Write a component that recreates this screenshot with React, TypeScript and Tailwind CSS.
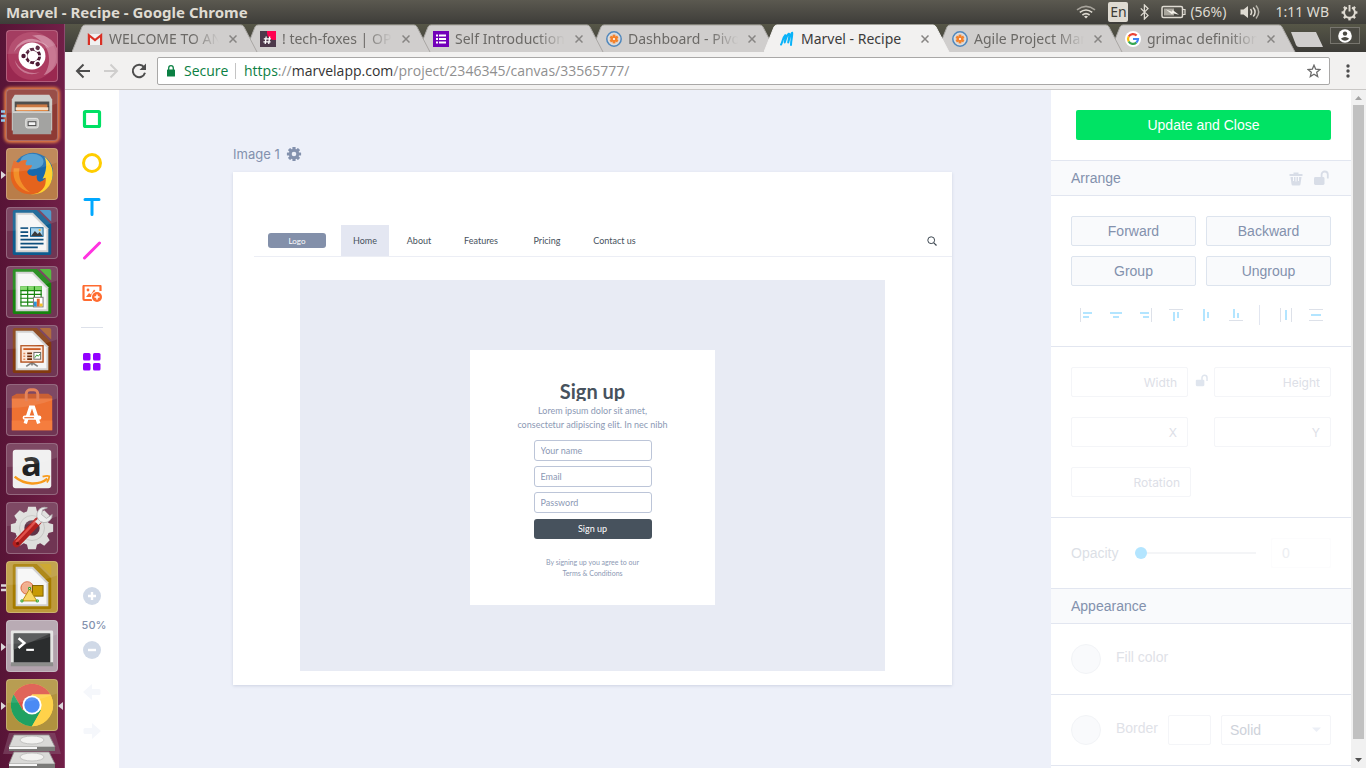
import type { ReactNode } from 'react';

const TEETH_8 = [0, 45, 90, 135, 180, 225, 270, 315];

/* ---------- shared drawings ---------- */

function Cog({ size, color, hole }: { size: number; color: string; hole: string }) {
  return (
    <svg width={size} height={size} viewBox="0 0 16 16" aria-hidden="true">
      {TEETH_8.map((a) => (
        <rect key={a} x="6.4" y="0.9" width="3.2" height="4" rx="0.5" fill={color} transform={`rotate(${a} 8 8)`} />
      ))}
      <circle cx="8" cy="8" r="5.2" fill={color} />
      <circle cx="8" cy="8" r="2.3" fill={hole} />
    </svg>
  );
}

function OpenLock({ width, height, color }: { width: number; height: number; color: string }) {
  return (
    <svg width={width} height={height} viewBox="0 0 16 16" aria-hidden="true">
      <rect x="1" y="7" width="10.5" height="8" rx="1.4" fill={color} />
      <path d="M8.6 8V4.6a3.1 3.1 0 0 1 6.2 0V8.6" fill="none" stroke={color} strokeWidth="1.8" />
    </svg>
  );
}

/* ---------- desktop panel ---------- */

function DesktopPanel() {
  return (
    <header className="flex h-6 shrink-0 items-center bg-linear-to-b from-[#5b5950] to-[#3e3d39] pl-1.5 pr-2 text-sm text-[#dfdbd2]">
      <h1 className="flex-1 truncate text-[15px] leading-5 font-bold">Marvel - Recipe - Google Chrome</h1>
      <svg width="20" height="14" viewBox="0 0 20 14" aria-label="Wi-Fi">
        <g fill="none" stroke="#dfdbd2" strokeWidth="1.6">
          <path d="M1 4.8Q10 -2 19 4.8" opacity=".6" />
          <path d="M3.8 7.4Q10 2.6 16.2 7.4" />
          <path d="M6.4 10Q10 7.2 13.6 10" />
        </g>
        <path d="M8 11.4Q10 10 12 11.4L10 13.4Z" fill="#dfdbd2" />
      </svg>
      <span className="ml-3 flex h-5 w-5 items-center justify-center rounded-xs bg-[#dfdbd2] text-sm text-[#3c3b37]">En</span>
      <svg className="ml-3" width="9" height="16" viewBox="0 0 9 16" aria-label="Bluetooth">
        <path d="M0.8 4.4L8 11.4L4.4 15V1L8 4.6L0.8 11.6" fill="none" stroke="#dfdbd2" strokeWidth="1.3" />
      </svg>
      <svg className="ml-3" width="25" height="14" viewBox="0 0 25 14" aria-label="Battery">
        <rect x="1" y="1.5" width="20.5" height="11" rx="1.5" fill="none" stroke="#dfdbd2" strokeWidth="1.5" />
        <path d="M22 4.5h2v5h-2" fill="none" stroke="#dfdbd2" strokeWidth="1.2" />
        <rect x="3" y="3.5" width="10" height="7" fill="#a9a69d" />
        <path d="M5 4.5l6 2.2.6-1.6L18 9.8l-6-1.6-.8 1.4Z" fill="#f4f1ea" />
      </svg>
      <span className="ml-1">(56%)</span>
      <svg className="ml-3.5" width="21" height="16" viewBox="0 0 21 16" aria-label="Volume">
        <path d="M0.5 5.5h3L8 2v12L3.5 10.5h-3Z" fill="#dfdbd2" />
        <g fill="none" stroke="#dfdbd2" strokeWidth="1.5">
          <path d="M10.5 5Q12.8 8 10.5 11" />
          <path d="M13.2 3.4Q17 8 13.2 12.6" />
          <path d="M16 1.6Q21.4 8 16 14.4" opacity=".7" />
        </g>
      </svg>
      <span className="ml-3.5">1:11 WB</span>
      <svg className="ml-3" width="17" height="17" viewBox="0 0 17 17" aria-label="Session">
        {TEETH_8.filter((a) => a !== 0).map((a) => (
          <rect key={a} x="7.3" y="0.6" width="2.4" height="3" fill="#dfdbd2" transform={`rotate(${a} 8.5 8.5)`} />
        ))}
        <path d="M6 3.6a5.4 5.4 0 1 0 5 0" fill="none" stroke="#dfdbd2" strokeWidth="1.9" />
        <path d="M8.5 1v6.5" stroke="#dfdbd2" strokeWidth="1.9" />
      </svg>
    </header>
  );
}

/* ---------- launcher ---------- */

function DocSheet({ edge, corner }: { edge: string; corner: string }) {
  return (
    <>
      <path d="M8 2H31L46 17V47a2 2 0 0 1-2 2H8a2 2 0 0 1-2-2V4a2 2 0 0 1 2-2Z" fill={edge} />
      <path d="M34 2H44a2 2 0 0 1 2 2V14Z" fill={corner} />
      <path d="M9 5H27L43 21V46H9Z" fill="#cfcfcf" />
      <path d="M11 7H26L41 22V44H11Z" fill="#f6f6f6" />
    </>
  );
}

const launcherItems: { name: string; tile: string; mark?: 'dots' | 'pair' | 'arrow' | 'active'; art: ReactNode }[] = [
  {
    name: 'Search your computer',
    tile: 'bg-[#9a2850]',
    art: (
      <>
        <circle cx="26" cy="26" r="25" fill="#b9486b" opacity=".6" />
        <path d="M26 5A21 21 0 0 1 38 46A26 26 0 0 0 26 5Z" fill="#e5b6c6" opacity=".5" />
        <path d="M7 22A20 20 0 0 1 26 8A26 26 0 0 1 44 18A24 24 0 0 0 7 22Z" fill="#f0c9d6" opacity=".5" />
        <path d="M8 30A18 18 0 0 0 34 43A22 22 0 0 1 8 30Z" fill="#e5b6c6" opacity=".5" />
        <circle cx="26" cy="26" r="14" fill="#fff" />
        <circle cx="27" cy="26" r="7" fill="none" stroke="#4e1a35" strokeWidth="3" />
        {[0, 120, 240].map((a) => (
          <g key={a} transform={`rotate(${a} 27 26)`}>
            <circle cx="18" cy="26" r="3.4" fill="#fff" />
            <circle cx="17.2" cy="26" r="2.3" fill="#4e1a35" />
            <path d="M32 26h4" stroke="#fff" strokeWidth="1.4" />
          </g>
        ))}
      </>
    ),
  },
  {
    name: 'Files',
    tile: 'bg-[#8e3a34] shadow-[0_0_3px_2px_#e07a45]',
    mark: 'dots',
    art: (
      <>
        <path d="M8 5H44L47 10V42H5V10Z" fill="#c9c9c6" />
        <rect x="8" y="12" width="36" height="14" fill="#3c3a39" />
        <path d="M10 15h32v11H10Z" fill="#c86b2f" />
        <path d="M9 18h34v3H9Z" fill="#f5ddc4" />
        <path d="M10 21h33v6H10Z" fill="#e88b3f" />
        <path d="M6 22H46V46H6Z" fill="#a3a3a1" />
        <path d="M6 22H46V24H6Z" fill="#cfcfcd" />
        <rect x="19.5" y="29.5" width="13" height="10" rx="2" fill="#c8c8c6" stroke="#e8e8e6" />
        <rect x="22" y="33" width="8" height="4" fill="#f4f4f4" stroke="#4a4a4a" />
      </>
    ),
  },
  {
    name: 'Firefox',
    tile: 'bg-[#b97d49]',
    mark: 'arrow',
    art: (
      <>
        <circle cx="27" cy="25" r="21" fill="#1769ad" />
        <ellipse cx="26" cy="13" rx="12" ry="8" fill="#62b8e6" opacity=".6" />
        <path d="M39 8C46 14 49 22 47 31C44 43 34 48 25 47C34 44 40 38 40 30L37 31C41 24 42 15 39 8Z" fill="#ffd22e" />
        <path d="M7 12C9 13 10 14 12 14C16 11 19 11 21 12C19 14 19 16 20 17L26 17C26 20 22 21 21 24C22 28 27 29 31 27C30 34 35 37 40 30C42 40 34 48 24 47C11 47 3 37 4 25C4 20 6 17 7 12Z" fill="#e5631d" />
        <path d="M7 20C5 32 12 42 24 45C15 38 11 29 13 20Z" fill="#f59a2d" opacity=".8" />
      </>
    ),
  },
  {
    name: 'LibreOffice Writer',
    tile: 'bg-[#703553]',
    art: (
      <>
        <DocSheet edge="#0d5c8f" corner="#3f8fc4" />
        <g stroke="#0e4f7d" strokeWidth="1.8">
          <path d="M14 21h8M14 25h8M14 29h8M14 33h24M14 37h24M14 41h18" />
        </g>
        <rect x="24.5" y="20.5" width="13" height="9" fill="#a9d6ef" stroke="#0d5c8f" />
        <path d="M25 29l4-5 3 3 2-2 3 4Z" fill="#3b3b3b" />
        <circle cx="34" cy="23" r="1.2" fill="#f6b530" />
      </>
    ),
  },
  {
    name: 'LibreOffice Calc',
    tile: 'bg-[#703553]',
    art: (
      <>
        <DocSheet edge="#17840f" corner="#43b52c" />
        <rect x="14.5" y="20.5" width="21" height="20" fill="#fff" stroke="#17840f" strokeWidth="1.2" />
        <path d="M14 20h22v4H14Z" fill="#7ed767" />
        <path d="M14 24.5h22M14 28.5h22M14 32.5h22M14 36.5h22M21.5 20v20M28.5 20v20" stroke="#17840f" strokeWidth="1.2" />
        <rect x="27.5" y="31.5" width="10" height="10" fill="#fff" stroke="#777" />
        <path d="M28 36h3v5h-3Z" fill="#2b95d9" />
        <path d="M31 33h3v8h-3Z" fill="#e2692b" />
        <path d="M34 38h3v3h-3Z" fill="#f3c22b" />
      </>
    ),
  },
  {
    name: 'LibreOffice Impress',
    tile: 'bg-[#703553]',
    art: (
      <>
        <DocSheet edge="#833a0e" corner="#a95d2a" />
        <path d="M26 38v3M20 42l6-4 6 4" fill="none" stroke="#808080" strokeWidth="1.8" />
        <rect x="14.5" y="20.5" width="23" height="17" fill="#fbe9dd" stroke="#b14c17" strokeWidth="1.4" />
        <path d="M17 24h18" stroke="#c9541a" strokeWidth="1.8" />
        <path d="M17 28.500h2M17 31.500h2M17 34.500h2" stroke="#e28b5c" strokeWidth="1.6" />
        <path d="M21 28.500h5M21 31.500h5M21 34.500h5" stroke="#6d2d0c" strokeWidth="1.8" />
        <rect x="28" y="27.500" width="7" height="7" fill="#fff" stroke="#666" />
        <path d="M29 33l2-3 1.500 1.500L34.500 29" fill="none" stroke="#32a02f" />
      </>
    ),
  },
  {
    name: 'Ubuntu Software',
    tile: 'bg-[#703553]',
    art: (
      <>
        <path d="M5 12L10 9H43L47 12V16H5Z" fill="#c54f1d" />
        <path d="M5 14H47V47H5Z" fill="#ee7132" />
        <path d="M5 37H47V47H5Z" fill="#f57d3e" />
        <path d="M20 17V9a4 4 0 0 1 4-4h4a4 4 0 0 1 4 4v8" fill="none" stroke="#e0764a" strokeWidth="3" />
        <path d="M19 40L24.500 23h3L33 40" fill="none" stroke="#fff" strokeWidth="3.600" />
        <path d="M18.500 34h15" stroke="#fff" strokeWidth="4.500" strokeLinecap="round" />
        <path d="M18 34h10" stroke="#ee7132" strokeWidth="1.200" />
      </>
    ),
  },
  {
    name: 'Amazon',
    tile: 'bg-[#703553]',
    art: (
      <>
        <rect x="6" y="6" width="40" height="40" rx="3" fill="#f0f0f0" />
        <text x="25.500" y="33" textAnchor="middle" fontFamily="Open Sans, sans-serif" fontWeight="700" fontSize="36" fill="#222">
          a
        </text>
        <path d="M8 34C18 43 34 43 42 36" fill="none" stroke="#f79a1c" strokeWidth="2.600" />
        <path d="M37 34C40 33 43 33 44 33.500C44 36 43 38 41.500 40" fill="none" stroke="#f79a1c" strokeWidth="1.800" />
      </>
    ),
  },
  {
    name: 'System Settings',
    tile: 'bg-[#703553]',
    art: (
      <>
        {TEETH_8.map((a) => (
          <path key={a} d="M20.500 10L22 4h8l1.500 6Z" fill="#dededc" transform={`rotate(${a} 26 26)`} />
        ))}
        <circle cx="26" cy="26" r="18" fill="#dededc" />
        <circle cx="26" cy="26" r="13" fill="none" stroke="#c5c5c3" />
        <circle cx="26" cy="26" r="8" fill="#5f3347" />
        <path d="M10 42L32 19" stroke="#b3201f" strokeWidth="8" strokeLinecap="round" />
        <path d="M10 40L30 19" stroke="#e0504a" strokeWidth="2.500" strokeLinecap="round" />
        <path d="M31 21L37 15" stroke="#e3e3e3" strokeWidth="5" />
        <path d="M42 5A8 8 0 1 0 47 12L41 16L36 12L37 7Z" fill="#ececec" stroke="#a8a8a8" strokeWidth=".8" />
        <circle cx="11" cy="42" r="1.600" fill="#6e1010" />
      </>
    ),
  },
  {
    name: 'LibreOffice Draw',
    tile: 'bg-[#bd9a3b]',
    mark: 'pair',
    art: (
      <>
        <DocSheet edge="#a67c00" corner="#c9a01c" />
        <circle cx="21" cy="27" r="6.500" fill="#f2b08f" stroke="#d8643a" />
        <rect x="26.500" y="24.500" width="11" height="11" fill="#c79a05" stroke="#7d5f00" />
        <path d="M23.500 28L31 40.500H16Z" fill="#f8d765" stroke="#b78d0c" />
        <path d="M22.500 26.500h2v2h-2ZM14.500 39.500h2v2h-2ZM30.500 39.500h2v2h-2Z" fill="#fff" stroke="#28a024" />
      </>
    ),
  },
  {
    name: 'Terminal',
    tile: 'bg-[#b2a2ac]',
    mark: 'arrow',
    art: (
      <>
        <rect x="4" y="10" width="44" height="36" rx="1.500" fill="#e4e4e2" />
        <path d="M4 43h44v4H4Z" fill="#8d8d8b" />
        <rect x="7" y="13" width="38" height="30" fill="#2b2d2e" />
        <path d="M7 13H45L7 30Z" fill="#4a4c4d" />
        <path d="M12 18l6 5-6 5" fill="none" stroke="#fff" strokeWidth="2.600" />
        <path d="M20 30h8" stroke="#fff" strokeWidth="2.200" />
      </>
    ),
  },
  {
    name: 'Google Chrome',
    tile: 'bg-[#b0923f]',
    mark: 'active',
    art: (
      <>
        <circle cx="26" cy="26" r="22" fill="#ffd24a" />
        <path d="M26 15H45.050A22 22 0 0 0 6.950 15L16.500 31.500Z" fill="#dd5447" />
        <path d="M6.950 15A22 22 0 0 0 26 48L35.500 31.500L16.500 31.500Z" fill="#1fa162" />
        <path d="M35.500 31.500L26 48A22 22 0 0 0 45.050 15H26Z" fill="#ffd24a" />
        <circle cx="26" cy="26" r="10" fill="#fff" />
        <circle cx="26" cy="26" r="8" fill="#4a8af4" />
      </>
    ),
  },
];

function RunMark({ mark }: { mark: 'dots' | 'pair' | 'arrow' | 'active' }) {
  if (mark === 'dots' || mark === 'pair') {
    return (
      <svg className="absolute top-5 -left-1.5 h-3 w-1.5" viewBox="0 0 6 12" aria-hidden="true">
        {mark === 'dots' ? (
          <path d="M0 1.500h4M0 6h5M0 10.500h4" stroke="#8fc8ea" strokeWidth="2.600" />
        ) : (
          <path d="M0 3.500h5M0 8h5" stroke="#dcd6da" strokeWidth="2.400" />
        )}
      </svg>
    );
  }
  return (
    <>
      <svg className="absolute top-5 -left-1.5 h-3 w-1.5" viewBox="0 0 6 12" aria-hidden="true">
        <path d="M0 2L5 6L0 10Z" fill="#dcd6da" />
      </svg>
      {mark === 'active' && (
        <svg className="absolute top-5 -right-1.5 h-3 w-1.5" viewBox="0 0 6 12" aria-hidden="true">
          <path d="M6 2L1 6L6 10Z" fill="#dcd6da" />
        </svg>
      )}
    </>
  );
}

function Launcher() {
  return (
    <nav aria-label="Launcher" className="flex w-[65px] shrink-0 flex-col items-center gap-[7px] overflow-hidden border-r border-[#8d4a70] bg-linear-to-r from-[#571436] to-[#711f47] pt-1.5">
      {launcherItems.map((item) => (
        <button key={item.name} type="button" aria-label={item.name} className={`relative size-[52px] shrink-0 rounded-sm border border-white/25 ${item.tile}`}>
          <svg className="size-[50px]" viewBox="0 0 52 52" aria-hidden="true">
            {item.art}
            <path d="M0 0H52V14Q26 24 0 24Z" fill="#fff" opacity=".1" />
          </svg>
          {item.mark && <RunMark mark={item.mark} />}
        </button>
      ))}
      <svg className="-mt-1.5 h-10 w-[58px] shrink-0" viewBox="0 0 58 40" aria-label="Drives">
        <path d="M6 1H52L58 22H0Z" fill="#8a5a74" opacity=".5" />
        {[0, 17, 34].map((y) => (
          <g key={y} transform={`translate(0 ${y})`}>
            <path d="M11 3H46L52 15H6Z" fill="#d9d9d7" stroke="#8f8f8d" strokeWidth=".8" />
            <ellipse cx="29" cy="8" rx="12" ry="4" fill="#f2f2f0" stroke="#b9b9b7" strokeWidth=".8" />
            <path d="M6 15H52V19H6Z" fill="#7b7b79" />
            <path d="M6 15H34V17H6Z" fill="#f6f6f6" />
          </g>
        ))}
      </svg>
    </nav>
  );
}

/* ---------- browser tabs ---------- */

function PivotalIcon() {
  return (
    <svg width="16" height="16" viewBox="0 0 16 16" aria-hidden="true">
      <circle cx="8" cy="8" r="7.200" fill="#dcdcdc" stroke="#4f87bd" strokeWidth="1.500" />
      {[0, 60, 120, 180, 240, 300].map((a) => (
        <path key={a} d="M8 6.500V3.600" stroke="#f5822a" strokeWidth="2.800" transform={`rotate(${a} 8 8)`} />
      ))}
      <circle cx="8" cy="8" r="2.600" fill="#f5822a" />
      <circle cx="8" cy="8" r="1.100" fill="#fff" />
    </svg>
  );
}

const tabs: { title: string; active?: boolean; z: string; icon: ReactNode }[] = [
  {
    title: 'WELCOME TO ANDELA',
    z: 'z-[7]',
    icon: (
      <svg width="16" height="16" viewBox="0 0 16 16" aria-hidden="true">
        <path d="M1 3H15V14H1Z" fill="#f1f1f1" />
        <path d="M1.900 14V4.200L8 9L14.100 4.200V14" fill="none" stroke="#d93025" strokeWidth="2.200" />
      </svg>
    ),
  },
  {
    title: '! tech-foxes | OPEN',
    z: 'z-[6]',
    icon: (
      <svg width="16" height="16" viewBox="0 0 16 16" aria-hidden="true">
        <path d="M0 0H16V16H0Z" fill="#4d394b" />
        <path d="M7 0H16V9A8 8 0 0 1 7 0Z" fill="#ff004f" />
        <path d="M6.200 5.500L5.200 13M9.700 5.500L8.700 13M3.800 7.800H11M3.400 10.800H10.600" stroke="#fff" strokeWidth="1.300" />
      </svg>
    ),
  },
  {
    title: 'Self Introduction',
    z: 'z-[5]',
    icon: (
      <svg width="16" height="16" viewBox="0 0 16 16" aria-hidden="true">
        <path d="M0 0H16V16H0Z" fill="#7200b9" />
        <path d="M3 4.500h2M3 8h2M3 11.500h2M6 4.500h7M6 8h7M6 11.500h7" stroke="#fff" strokeWidth="1.800" />
      </svg>
    ),
  },
  { title: 'Dashboard - Pivotal', z: 'z-[4]', icon: <PivotalIcon /> },
  {
    title: 'Marvel - Recipe',
    active: true,
    z: 'z-10',
    icon: (
      <svg width="16" height="16" viewBox="0 0 16 16" aria-hidden="true">
        <path
          d="M2 13.600C3.400 12 4 6 6.200 4.200C7.400 3.600 6.200 8 5.700 11.500C6.900 8 8.200 3.400 9.800 2.800C11 2.600 9.800 8 9.200 11.500C10.300 7.500 11.800 1.700 13.200 1.700C14 2.200 12 9 12 14"
          fill="none"
          stroke="#09b3f9"
          strokeWidth="2"
          strokeLinecap="round"
          strokeLinejoin="round"
        />
      </svg>
    ),
  },
  { title: 'Agile Project Management', z: 'z-[3]', icon: <PivotalIcon /> },
  {
    title: 'grimac definition',
    z: 'z-[2]',
    icon: (
      <svg width="16" height="16" viewBox="0 0 16 16" aria-hidden="true">
        <circle cx="8" cy="8" r="8" fill="#fff" />
        <g fill="none" strokeWidth="2.200">
          <path d="M11.600 4.600A5 5 0 0 0 3.700 5.500" stroke="#ea4335" />
          <path d="M3.700 5.500A5 5 0 0 0 3.700 10.500" stroke="#fbbc05" />
          <path d="M3.700 10.500A5 5 0 0 0 11.300 11.700" stroke="#34a853" />
          <path d="M11.300 11.700A5 5 0 0 0 13 8H8" stroke="#4285f4" />
        </g>
      </svg>
    ),
  },
];

function TabStrip() {
  return (
    <div className="flex h-7 shrink-0 bg-linear-to-b from-[#565647] to-[#3d3c38] pl-[7px]">
      <div role="tablist" className="flex min-w-0">
        {tabs.map((tab) => (
          <div key={tab.title} role="tab" aria-selected={!!tab.active} className={`relative flex w-[173px] min-w-0 items-center gap-1.5 pt-0.5 pr-1 pl-[15px] ${tab.z}`}>
            <svg className="absolute top-0 left-0 h-7 w-[187px]" viewBox="0 0 187 28" aria-hidden="true">
              <path d="M0 28L10 3Q11 1 13 1H169Q171 1 172 3L185 28Z" fill={tab.active ? '#f2f1f0' : '#d0cecd'} />
              <path d="M0 28L10 3Q11 1 13 1H169Q171 1 172 3L185 28" fill="none" stroke={tab.active ? '#f2f1f0' : '#a9a7a4'} strokeWidth="1" />
            </svg>
            <span className="relative shrink-0">{tab.icon}</span>
            <span
              className={`relative min-w-0 flex-1 overflow-hidden text-sm whitespace-nowrap ${
                tab.active ? 'text-[#3c3c3c]' : 'mask-r-from-75% mask-r-to-100% text-[#6b6966]'
              }`}
            >
              {tab.title}
            </span>
            <button type="button" aria-label={`Close ${tab.title}`} className="relative flex size-4 shrink-0 items-center justify-center">
              <svg width="8" height="8" viewBox="0 0 8 8" aria-hidden="true">
                <path d="M0.500 0.500L7.500 7.500M7.500 0.500L0.500 7.500" stroke="#878583" strokeWidth="1.500" />
              </svg>
            </button>
          </div>
        ))}
      </div>
      <button type="button" aria-label="New tab" className="mt-2 ml-2 h-4 w-8 shrink-0">
        <svg width="32" height="16" viewBox="0 0 32 16" aria-hidden="true">
          <path d="M0 0H25L32 15H8Q6 15 5 13Z" fill="#d0cecd" />
        </svg>
      </button>
      <button type="button" aria-label="Profile" className="mt-[3px] mr-1.5 ml-auto flex h-[17px] w-[30px] shrink-0 items-center justify-center border border-[#77756e] bg-[#4b4a43]">
        <svg width="14" height="14" viewBox="0 0 14 14" aria-hidden="true">
          <circle cx="7" cy="7" r="6.800" fill="#fff" />
          <circle cx="7" cy="4.600" r="2.200" fill="#4b4a43" />
          <path d="M2.800 9.800Q7 6.400 11.200 9.800Q7 13.500 2.800 9.800Z" fill="#4b4a43" />
        </svg>
      </button>
    </div>
  );
}

function Toolbar() {
  return (
    <div className="flex h-[38px] shrink-0 items-center border-b border-[#c9c7c5] bg-[#f2f1f0] pr-4 pl-2.5">
      <button type="button" aria-label="Back" className="size-4">
        <svg width="16" height="16" viewBox="0 0 16 16" fill="none" stroke="#4d4d4d" strokeWidth="2">
          <path d="M15 8H2.500M8.500 1.500L2 8L8.500 14.500" />
        </svg>
      </button>
      <button type="button" aria-label="Forward" className="ml-3 size-4">
        <svg width="16" height="16" viewBox="0 0 16 16" fill="none" stroke="#cfcecd" strokeWidth="2">
          <path d="M1 8H13.500M7.500 1.500L14 8L7.500 14.500" />
        </svg>
      </button>
      <button type="button" aria-label="Reload" className="ml-3 size-4">
        <svg width="16" height="16" viewBox="0 0 16 16">
          <path d="M13 4.200A6.200 6.200 0 1 0 14 9.800" fill="none" stroke="#4d4d4d" strokeWidth="2" />
          <path d="M15 0.500V7H8.500Z" fill="#4d4d4d" />
        </svg>
      </button>
      <div className="ml-2.5 flex h-7 min-w-0 flex-1 items-center rounded-xs border border-[#a9a8a7] bg-white px-2 font-['Open_Sans',sans-serif] text-sm">
        <svg width="10" height="12" viewBox="0 0 10 12" aria-hidden="true">
          <rect x="1" y="4.500" width="8" height="7" rx=".6" fill="#0b8043" />
          <path d="M2.700 5V3a2.300 2.300 0 0 1 4.600 0v2" fill="none" stroke="#0b8043" strokeWidth="1.300" />
        </svg>
        <span className="ml-2 w-[43px] text-[#0b8043]">Secure</span>
        <span className="mx-2 h-4 w-px bg-[#c4c4c4]" />
        <p className="flex-1 truncate text-[#8f8f8f]">
          <span className="text-[#0b8043]">https</span>://<span className="text-[#333]">marvelapp.com</span>/project/2346345/canvas/33565777/
        </p>
        <button type="button" aria-label="Bookmark">
          <svg width="14" height="14" viewBox="0 0 14 14">
            <path d="M7 1.200L8.700 5.200L13 5.500L9.700 8.300L10.700 12.600L7 10.300L3.300 12.600L4.300 8.300L1 5.500L5.300 5.200Z" fill="none" stroke="#6a6a6a" strokeWidth="1.300" />
          </svg>
        </button>
      </div>
      <button type="button" aria-label="Menu" className="ml-4">
        <svg width="4" height="14" viewBox="0 0 4 14" fill="#4d4d4d">
          <circle cx="2" cy="2" r="1.700" />
          <circle cx="2" cy="7" r="1.700" />
          <circle cx="2" cy="12" r="1.700" />
        </svg>
      </button>
    </div>
  );
}

/* ---------- editor ---------- */

const tools: { name: string; art: ReactNode }[] = [
  { name: 'Rectangle', art: <rect x="2.500" y="2.500" width="15" height="15" rx="1" fill="none" stroke="#00e064" strokeWidth="3.200" /> },
  { name: 'Ellipse', art: <circle cx="10" cy="10" r="8.500" fill="none" stroke="#ffcd00" strokeWidth="3" /> },
  { name: 'Text', art: <path d="M3 2.500H17M10 2.500V17.500" stroke="#00a8ff" strokeWidth="3" strokeLinecap="round" /> },
  { name: 'Line', art: <path d="M2.500 17L17.500 2" stroke="#ff33e0" strokeWidth="3" strokeLinecap="round" /> },
  {
    name: 'Image',
    art: (
      <g transform="translate(0 -2)">
        <path d="M10 17H2.500a1 1 0 0 1-1-1V3.500a1 1 0 0 1 1-1h15a1 1 0 0 1 1 1V8" fill="none" stroke="#ff6b30" strokeWidth="2.200" />
        <path d="M4 14L7 10L9 11.500L12 6.500L13.500 8L10 14Z" fill="#ff6b30" />
        <circle cx="6" cy="7" r="1.400" fill="#ff6b30" />
        <circle cx="15" cy="14" r="6" fill="#fff" />
        <circle cx="15" cy="14" r="5" fill="#ff6b30" />
        <path d="M12.500 14h5M15 11.500v5" stroke="#fff" strokeWidth="1.500" />
      </g>
    ),
  },
];

function ToolRail() {
  return (
    <aside className="flex w-[54px] shrink-0 flex-col items-center bg-white pt-[19px] pb-7">
      <div className="flex flex-col gap-6">
        {tools.map((tool) => (
          <button key={tool.name} type="button" aria-label={tool.name} className="size-5">
            <svg width="20" height="20" viewBox="0 0 20 20">{tool.art}</svg>
          </button>
        ))}
      </div>
      <hr className="mt-[22px] w-[22px] border-[#dde1ea]" />
      <button type="button" aria-label="Components" className="mt-6 size-5">
        <svg width="20" height="20" viewBox="0 0 20 20" fill="#9200ff">
          <rect x="1" y="1" width="7.500" height="7.500" rx="1.500" />
          <rect x="11" y="1" width="7.500" height="7.500" rx="1.500" />
          <rect x="1" y="11" width="7.500" height="7.500" rx="1.500" />
          <rect x="11" y="11" width="7.500" height="7.500" rx="1.500" />
        </svg>
      </button>
      <div className="mt-auto flex flex-col items-center">
        <button type="button" aria-label="Zoom in" className="size-[18px]">
          <svg width="18" height="18" viewBox="0 0 18 18">
            <circle cx="9" cy="9" r="9" fill="#d0d9e7" />
            <path d="M5 9h8M9 5v8" stroke="#fff" strokeWidth="2.400" />
          </svg>
        </button>
        <span className="mt-3.5 mb-2.5 pl-1 font-['Inter',sans-serif] text-[11px] leading-3 font-medium text-[#8391ad]">50%</span>
        <button type="button" aria-label="Zoom out" className="size-[18px]">
          <svg width="18" height="18" viewBox="0 0 18 18">
            <circle cx="9" cy="9" r="9" fill="#d0d9e7" />
            <path d="M5 9h8" stroke="#fff" strokeWidth="2.400" />
          </svg>
        </button>
        <button type="button" aria-label="Undo" className="mt-6 h-[18px]">
          <svg width="20" height="18" viewBox="0 0 20 18">
            <path d="M1 9L10 1V6H17a1.500 1.500 0 0 1 1.500 1.500v3A1.500 1.500 0 0 1 17 12H10v5Z" fill="#f5f7fb" />
          </svg>
        </button>
        <button type="button" aria-label="Redo" className="mt-[21px] h-[18px]">
          <svg width="20" height="18" viewBox="0 0 20 18">
            <path d="M19 9L10 1V6H3a1.500 1.500 0 0 0-1.500 1.500v3A1.500 1.500 0 0 0 3 12h7v5Z" fill="#f5f7fb" />
          </svg>
        </button>
      </div>
    </aside>
  );
}

function Artboard() {
  const field = 'h-[21px] w-full rounded-[3px] border border-[#bcc5d8] bg-white px-1.5 text-[9px] placeholder:text-[#8c99b4] placeholder:opacity-100';
  return (
    <section className="bg-white pt-[53px] pb-[14px] font-['Lato',sans-serif] text-[9px] text-[#47525d] shadow-[0_1px_3px_#cdd3e2]">
      <div className="ml-[21px] flex h-8 items-center border-b border-[#eceef5] pr-[15px] pl-[14px]">
        <span className="flex h-[15px] w-[58px] items-center justify-center rounded-[3px] bg-[#8390aa] text-[8px] text-white">Logo</span>
        <nav className="ml-[15px] flex h-full items-center">
          <a href="#home" className="flex h-full w-12 items-center justify-center bg-[#e4e7f2]">Home</a>
          <a href="#about" className="w-[60px] text-center">About</a>
          <a href="#features" className="w-16 text-center">Features</a>
          <a href="#pricing" className="w-[68px] text-center">Pricing</a>
          <a href="#contact" className="w-[67px] text-center">Contact us</a>
        </nav>
        <svg className="ml-auto" width="10" height="10" viewBox="0 0 10 10" aria-label="Search">
          <circle cx="4.200" cy="4.200" r="3.400" fill="none" stroke="#3c4650" strokeWidth="1" />
          <path d="M6.800 6.800L9.500 9.500" stroke="#3c4650" strokeWidth="1.200" />
        </svg>
      </div>
      <div className="mx-[67px] mt-[23px] flex justify-center bg-[#e8ebf4] pt-[70px] pb-[66px]">
        <form className="flex w-[245px] flex-col items-center bg-white pt-[29px] pb-[26px]" onSubmit={(e) => e.preventDefault()}>
          <h2 className="h-[22px] overflow-hidden text-xl leading-6 font-bold">Sign up</h2>
          <p className="mt-[3px] text-center leading-[14px] text-[#8c99b4]">
            Lorem ipsum dolor sit amet,
            <br />
            consectetur adipiscing elit. In nec nibh
          </p>
          <div className="mt-2 flex w-[118px] flex-col gap-[5px]">
            <input aria-label="Your name" placeholder="Your name" className={field} />
            <input aria-label="Email" placeholder="Email" className={field} />
            <input aria-label="Password" type="password" placeholder="Password" className={field} />
            <button type="submit" className="mt-px h-5 rounded-[3px] bg-[#47525d] text-white">Sign up</button>
          </div>
          <p className="mt-[18px] text-center text-[7px] leading-[11px] text-[#8c99b4]">
            By signing up you agree to our
            <br />
            Terms &amp; Conditions
          </p>
        </form>
      </div>
    </section>
  );
}

const grey = '#dde1e9';
const blue = '#b3e5ff';

const alignTools: { name: string; art: ReactNode }[] = [
  { name: 'Align left', art: <><path d="M1.500 3v14" stroke={grey} /><path d="M4 8h9M4 12h6" stroke={blue} strokeWidth="2" /></> },
  { name: 'Align center', art: <path d="M1 8h12M4 12h6" stroke={blue} strokeWidth="2" /> },
  { name: 'Align right', art: <><path d="M12.500 3v14" stroke={grey} /><path d="M1 8h9M4 12h6" stroke={blue} strokeWidth="2" /></> },
  { name: 'Align top', art: <><path d="M0 4.500h14" stroke={grey} /><path d="M5 7v9M9 7v6" stroke={blue} strokeWidth="2" /></> },
  { name: 'Align middle', art: <path d="M5 4v12M9 7v6" stroke={blue} strokeWidth="2" /> },
  { name: 'Align bottom', art: <><path d="M0 15.500h14" stroke={grey} /><path d="M5 4v9M9 8v5" stroke={blue} strokeWidth="2" /></> },
];

const spreadTools: { name: string; art: ReactNode }[] = [
  { name: 'Distribute horizontally', art: <><path d="M1.500 3v14M12.500 3v14" stroke={grey} /><path d="M7 5v10" stroke={blue} strokeWidth="2" /></> },
  { name: 'Distribute vertically', art: <><path d="M0 4.500h14M0 15.500h14" stroke={grey} /><path d="M2 10h10" stroke={blue} strokeWidth="2" /></> },
];

function AlignButton({ name, art }: { name: string; art: ReactNode }) {
  return (
    <button type="button" aria-label={name} className="h-5 w-[14px]">
      <svg width="14" height="20" viewBox="0 0 14 20">{art}</svg>
    </button>
  );
}

function NumberBox({ label, className = '' }: { label: string; className?: string }) {
  return (
    <input
      aria-label={label}
      placeholder={label}
      className={`h-[30px] min-w-0 rounded-xs border border-[#f4f5f8] bg-white px-2.5 text-right font-['Inter',sans-serif] text-xs placeholder:text-[#dde0e7] placeholder:opacity-100 ${className}`}
    />
  );
}

function Inspector() {
  const heading = 'flex h-9 items-center border-y border-[#e2e6f0] bg-[#f9fafc] px-5 text-[#8391ad]';
  const action = 'h-[30px] rounded-xs border border-[#dde4ee] bg-[#f9fafc] text-[#8391ad]';
  return (
    <aside className="w-[300px] shrink-0 overflow-hidden bg-white font-['Liberation_Sans',sans-serif] text-sm">
      <div className="pt-5 pr-5 pb-5 pl-[25px]">
        <button type="button" className="h-[30px] w-full rounded-xs bg-[#00e364] text-white">Update and Close</button>
      </div>
      <div className={heading}>
        <h2 className="flex-1">Arrange</h2>
        <button type="button" aria-label="Delete">
          <svg width="14" height="15" viewBox="0 0 14 15" fill="#d8dde7">
            <path d="M0.500 3H4.500V1.500H9.500V3H13.500V5H0.500ZM1.500 6H12.500L11.500 13a1.500 1.500 0 0 1-1.500 1.500H4A1.500 1.500 0 0 1 2.500 13Z" />
            <path d="M4.500 6v4M7 6v4.500M9.500 6v4" stroke="#f9fafc" strokeWidth="1" />
          </svg>
        </button>
        <button type="button" aria-label="Unlock" className="mr-0.5 ml-2.5">
          <OpenLock width={16} height={16} color="#d8dde7" />
        </button>
      </div>
      <div className="px-5 pt-5 pb-[21px]">
        <div className="grid grid-cols-2 gap-2.5">
          <button type="button" className={action}>Forward</button>
          <button type="button" className={action}>Backward</button>
          <button type="button" className={action}>Group</button>
          <button type="button" className={action}>Ungroup</button>
        </div>
        <div className="mt-[19px] flex items-center gap-4 px-2">
          {alignTools.map((tool) => (
            <AlignButton key={tool.name} {...tool} />
          ))}
          <span className="h-5 w-px bg-[#e2e6f0]" />
          <div className="ml-auto flex gap-4">
            {spreadTools.map((tool) => (
              <AlignButton key={tool.name} {...tool} />
            ))}
          </div>
        </div>
      </div>
      <div className="grid grid-cols-[1fr_26px_1fr] gap-y-5 border-t border-[#e2e6f0] p-5">
        <NumberBox label="Width" />
        <button type="button" aria-label="Lock proportions" className="mx-auto mb-1">
          <OpenLock width={13} height={13} color="#dfe5ee" />
        </button>
        <NumberBox label="Height" />
        <NumberBox label="X" />
        <span />
        <NumberBox label="Y" />
        <NumberBox label="Rotation" className="col-span-2 w-[120px]" />
      </div>
      <div className="flex h-[71px] items-center border-t border-[#e2e6f0] px-5 text-[#dcdfe6]">
        <label htmlFor="opacity" className="w-16">Opacity</label>
        <input
          id="opacity"
          type="range"
          defaultValue={0}
          className="h-3 w-[121px] appearance-none bg-transparent [&::-webkit-slider-runnable-track]:h-0.5 [&::-webkit-slider-runnable-track]:bg-[#f4f5f7] [&::-webkit-slider-thumb]:-mt-[5px] [&::-webkit-slider-thumb]:size-3 [&::-webkit-slider-thumb]:appearance-none [&::-webkit-slider-thumb]:rounded-full [&::-webkit-slider-thumb]:bg-[#b3e5ff]"
        />
        <input aria-label="Opacity value" defaultValue="0" className="ml-auto h-[30px] w-[60px] rounded-xs border border-[#fcfcfd] px-2.5 text-[#eceef2]" />
      </div>
      <h2 className={heading}>Appearance</h2>
      <div className="flex p-5 text-[#dfe2e8]">
        <span className="size-[30px] rounded-full border border-[#f2f4f7] bg-[#f9fafc]" />
        <span className="ml-[15px] pt-[3px]">Fill color</span>
      </div>
      <div className="flex border-y border-[#e2e6f0] p-5 text-[#dfe2e8]">
        <span className="size-[30px] rounded-full border border-[#f2f4f7] bg-[#f9fafc]" />
        <span className="ml-[15px] w-[52px] pt-[3px]">Border</span>
        <input aria-label="Border width" className="h-[30px] w-[43px] rounded-xs border border-[#f4f5f8]" />
        <div className="relative ml-2.5 flex-1">
          <select aria-label="Border style" className="h-[30px] w-full appearance-none rounded-xs border border-[#f4f5f8] bg-white px-2 text-[#ced2da]">
            <option>Solid</option>
          </select>
          <svg className="pointer-events-none absolute top-3 right-2.5" width="9" height="5" viewBox="0 0 9 5" aria-hidden="true">
            <path d="M0 0.500H9L4.500 5Z" fill="#eceff6" />
          </svg>
        </div>
      </div>
    </aside>
  );
}

function Scrollbar() {
  return (
    <div className="flex w-[15px] shrink-0 flex-col items-center bg-[#f1f1f1]" aria-hidden="true">
      <svg width="15" height="15" viewBox="0 0 15 15">
        <path d="M4 10L7.500 6L11 10Z" fill="#a3a3a3" />
      </svg>
      <div className="mb-3.5 w-[11px] flex-1 bg-[#c1c1c1]" />
      <svg width="15" height="15" viewBox="0 0 15 15">
        <path d="M4 5L7.500 9L11 5Z" fill="#505050" />
      </svg>
    </div>
  );
}

export default function App() {
  return (
    <div className="flex h-screen flex-col overflow-hidden font-['Noto_Sans',sans-serif]">
      <DesktopPanel />
      <div className="flex min-h-0 flex-1">
        <Launcher />
        <div className="flex min-w-0 flex-1 flex-col">
          <TabStrip />
          <Toolbar />
          <div className="flex min-h-0 flex-1">
            <ToolRail />
            <main className="min-w-0 flex-1 bg-[#edf0f9] pt-[54px] pr-[99px] pl-[114px]">
              <div className="mb-2 flex items-center gap-1.5 font-['Inter',sans-serif] text-[13px] leading-5 text-[#8391ad]">
                <span>Image 1</span>
                <Cog size={16} color="#8391ad" hole="#edf0f9" />
              </div>
              <Artboard />
            </main>
            <Inspector />
            <Scrollbar />
          </div>
        </div>
      </div>
    </div>
  );
}
